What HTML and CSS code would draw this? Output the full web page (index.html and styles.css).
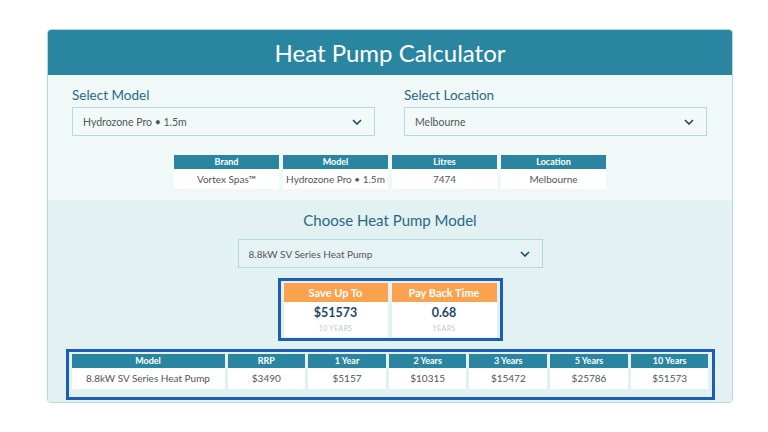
FILE: index.html
```html
<!DOCTYPE html>
<html lang="en">
<head>
    <meta charset="UTF-8">
    <meta name="viewport" content="width=device-width, initial-scale=1.0">
    <title>Heat Pump Calculator</title>
    <link rel="stylesheet" href="styles.css">
</head>
<body>
    <div class="calculator">
        <h1 class="calc-title">Heat Pump Calculator</h1>

        <div class="spa-section">
            <div class="select-row">
                <div class="field">
                    <label>Select Model</label>
                    <div class="select-box">
                        <span>Hydrozone Pro • 1.5m</span>
                        <svg width="10" height="6" viewBox="0 0 10 6"><path d="M1 1l4 4 4-4" fill="none" stroke="#1e4a66" stroke-width="1.6"/></svg>
                    </div>
                </div>
                <div class="field">
                    <label>Select Location</label>
                    <div class="select-box">
                        <span>Melbourne</span>
                        <svg width="10" height="6" viewBox="0 0 10 6"><path d="M1 1l4 4 4-4" fill="none" stroke="#1e4a66" stroke-width="1.6"/></svg>
                    </div>
                </div>
            </div>

            <div class="info-table">
                <div class="th">Brand</div>
                <div class="th">Model</div>
                <div class="th">Litres</div>
                <div class="th">Location</div>
                <div class="td">Vortex Spas™</div>
                <div class="td">Hydrozone Pro • 1.5m</div>
                <div class="td">7474</div>
                <div class="td">Melbourne</div>
            </div>
        </div>

        <div class="pump-section">
            <h2 class="pump-title">Choose Heat Pump Model</h2>
            <div class="select-box pump-select">
                <span>8.8kW SV Series Heat Pump</span>
                <svg width="10" height="6" viewBox="0 0 10 6"><path d="M1 1l4 4 4-4" fill="none" stroke="#1e4a66" stroke-width="1.6"/></svg>
            </div>

            <div class="savings">
                <div class="saving">
                    <div class="saving-head">Save Up To</div>
                    <div class="saving-body">
                        <div class="saving-value">$51573</div>
                        <div class="saving-unit">10 YEARS</div>
                    </div>
                </div>
                <div class="saving">
                    <div class="saving-head">Pay Back Time</div>
                    <div class="saving-body">
                        <div class="saving-value">0.68</div>
                        <div class="saving-unit">YEARS</div>
                    </div>
                </div>
            </div>

            <div class="results">
                <div class="results-table">
                    <div class="th">Model</div>
                    <div class="th">RRP</div>
                    <div class="th">1 Year</div>
                    <div class="th">2 Years</div>
                    <div class="th">3 Years</div>
                    <div class="th">5 Years</div>
                    <div class="th">10 Years</div>
                    <div class="td">8.8kW SV Series Heat Pump</div>
                    <div class="td">$3490</div>
                    <div class="td">$5157</div>
                    <div class="td">$10315</div>
                    <div class="td">$15472</div>
                    <div class="td">$25786</div>
                    <div class="td">$51573</div>
                </div>
            </div>
        </div>
    </div>
</body>
</html>
```

FILE: styles.css
```css
* {
    margin: 0;
    padding: 0;
    box-sizing: border-box;
    font-family: "Lato", "Open Sans", sans-serif;
}
body {
    background: #fff;
}
.calculator {
    width: 686px;
    margin: 29px 0 0 47px;
    border: 1px solid #b3dadd;
    border-radius: 4px;
    overflow: hidden;
    box-shadow: 0 2px 4px rgba(0, 0, 0, 0.05);
}
.calc-title {
    height: 45px;
    background: #2a86a0;
    color: #fff;
    font-size: 24px;
    font-weight: 400;
    text-align: center;
    line-height: 45px;
}
.spa-section {
    background: #f0f8f8;
    padding: 12px 24px 11px 24px;
}
.select-row {
    display: grid;
    grid-template-columns: 303px 303px;
    column-gap: 29px;
}
.field label {
    display: block;
    font-size: 13.5px;
    color: #2c6885;
    margin-bottom: 4px;
    line-height: 16px;
}
.select-box {
    height: 29px;
    border: 1px solid #b3dadd;
    background: #f2f9f9;
    display: flex;
    align-items: center;
    justify-content: space-between;
    padding: 0 12px 0 10px;
    font-size: 10.5px;
    color: #555;
}
.info-table {
    display: grid;
    grid-template-columns: repeat(4, 105px);
    column-gap: 4px;
    justify-content: center;
    margin-top: 19px;
}
.th {
    background: #2a86a0;
    color: #fff;
    font-size: 9px;
    font-weight: 700;
    text-align: center;
    height: 14px;
    line-height: 14px;
}
.td {
    background: #fff;
    color: #555;
    font-size: 10px;
    text-align: center;
    height: 20px;
    line-height: 20px;
}
.pump-section {
    background: #e2f1f2;
    padding: 11px 0 2px 0;
    display: flex;
    flex-direction: column;
    align-items: center;
}
.pump-title {
    font-size: 15px;
    font-weight: 400;
    color: #2c6885;
    line-height: 18px;
}
.pump-select {
    width: 305px;
    margin-top: 10px;
    background: #e6f3f4;
    padding-left: 10px;
    font-size: 10px;
}
.savings {
    display: flex;
    gap: 4px;
    margin-top: 10px;
    border: 3px solid #1e5db5;
    padding: 2px 3px 1px 3px;
}
.saving {
    width: 104px;
}
.saving:last-child {
    width: 105px;
}
.saving-head {
    background: #fba24f;
    color: #fff;
    font-size: 11px;
    font-weight: 700;
    text-align: center;
    height: 19px;
    line-height: 19px;
}
.saving-body {
    background: #fff;
    height: 35px;
    text-align: center;
    padding-top: 3px;
}
.saving-value {
    font-size: 12.5px;
    font-weight: 700;
    color: #1c4a6b;
    line-height: 16px;
}
.saving-unit {
    font-size: 7px;
    color: #b9c9d2;
    letter-spacing: 0.3px;
    margin-top: 3px;
}
.results {
    margin-top: 8px;
    width: 649px;
    border: 3px solid #1e5db5;
    padding: 2px 3px 8px 3px;
}
.results-table {
    display: grid;
    grid-template-columns: 153px repeat(6, 1fr);
    column-gap: 3px;
}
.results-table .td {
    height: 21px;
    line-height: 21px;
}
```
